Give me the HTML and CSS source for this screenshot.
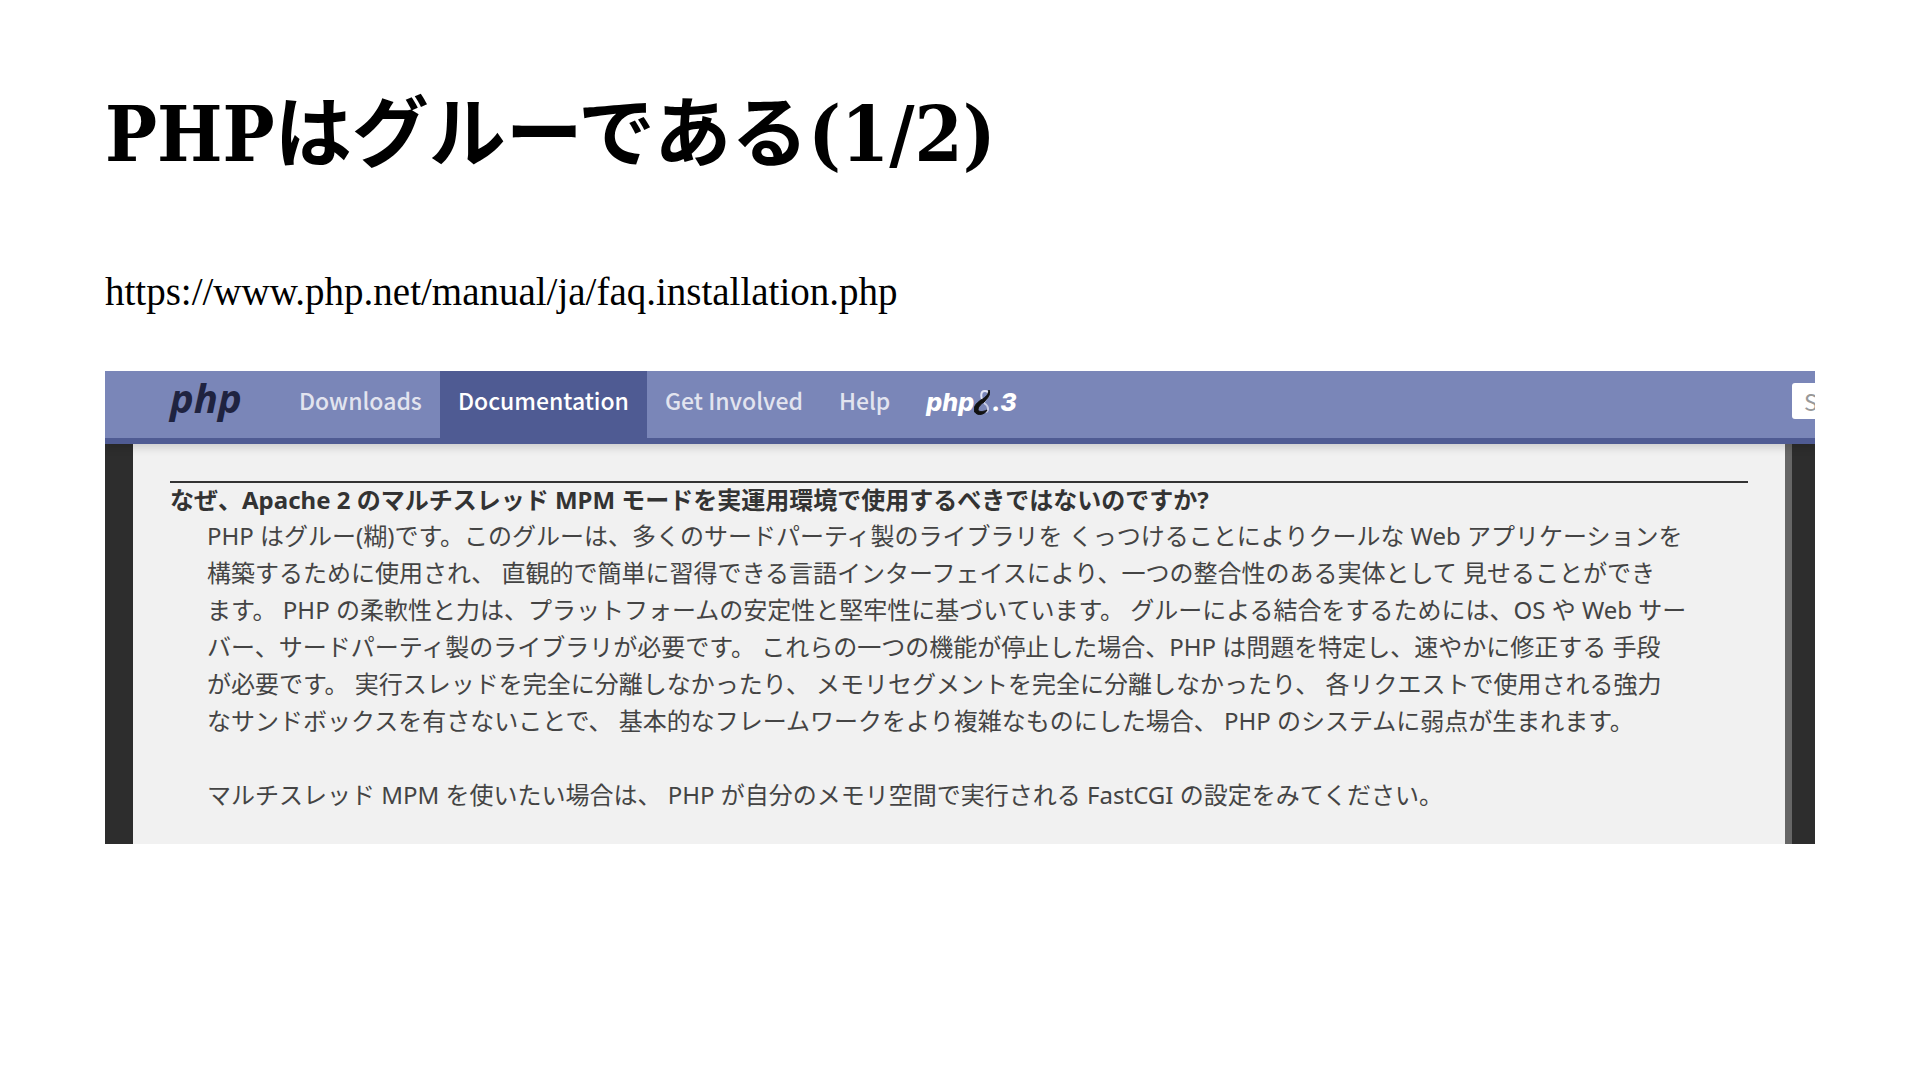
FILE: index.html
```html
<!DOCTYPE html>
<html lang="ja">
	<head>
		<meta charset="utf-8">
		<meta name="viewport" content="width=device-width,initial-scale=1.0">
		<title>PHPはグルーである(1/2)</title>
		<link rel="stylesheet" href="styles.css">
	</head>
	<body>
		<main class="slide">
			<h1>PHPは<wbr>グルーである(1/2)</h1>
			<p class="source">https://www.php.net/manual/ja/faq.installation.php</p>

			<section class="capture">
				<nav class="navbar">
					<a class="brand" href="#">php</a>
					<a class="item" href="#">Downloads</a>
					<a class="item active" href="#">Documentation</a>
					<a class="item" href="#">Get Involved</a>
					<a class="item" href="#">Help</a>
					<a class="release" href="#">
						<span>php</span>
						<svg width="18" height="28" viewBox="0 0 18 28" aria-label="8">
							<path d="M11 14C6 11 6 3 11 3c5 0 4 6-1 10" fill="none" stroke="#e4e6f4" stroke-width="2"/>
							<path d="M10 15c5 3 5 8 2 9" fill="none" stroke="#c9cde6" stroke-width="2"/>
							<path d="M15 2c2 5-2 9-5 12-4 3-6 5-6 8 1 2 5 2 9 0-3 6-12 6-13 0 0-5 4-8 7-10 5-3 7-5 8-10z" fill="#111" stroke="#111" stroke-width="1"/>
						</svg>
						<span>.3</span>
					</a>
					<input class="search" type="search" placeholder="Search" aria-label="Search">
				</nav>
				<div class="backdrop">
					<dl class="faq">
						<dt>なぜ、Apache 2 のマルチスレッド MPM モードを実運用環境で使用するべきではないのですか?</dt>
						<dd>
							<p>
								PHP はグルー(糊)です。このグルーは、多くのサードパーティ製のライブラリを くっつけることによりクールな Web アプリケーションを<br>
								構築するために使用され、 直観的で簡単に習得できる言語インターフェイスにより、一つの整合性のある実体として 見せることができ<br>
								ます。 PHP の柔軟性と力は、プラットフォームの安定性と堅牢性に基づいています。 グルーによる結合をするためには、OS や Web サー<br>
								バー、サードパーティ製のライブラリが必要です。 これらの一つの機能が停止した場合、PHP は問題を特定し、速やかに修正する 手段<br>
								が必要です。 実行スレッドを完全に分離しなかったり、 メモリセグメントを完全に分離しなかったり、 各リクエストで使用される強力<br>
								なサンドボックスを有さないことで、 基本的なフレームワークをより複雑なものにした場合、 PHP のシステムに弱点が生まれます。
							</p>
							<p>マルチスレッド MPM を使いたい場合は、 PHP が自分のメモリ空間で実行される FastCGI の設定をみてください。</p>
						</dd>
					</dl>
				</div>
			</section>
		</main>
	</body>
</html>
```
FILE: styles.css
```css
* {
	box-sizing: border-box;
}

body {
	margin: 0;
	background: #fff;
	color: #000;
}

.slide {
	padding: 82px 105px;
}

h1 {
	margin: 0;
	font-family: "DejaVu Serif Condensed", "DejaVu Serif", "Noto Sans CJK JP", serif;
	font-size: 77px;
	font-weight: bold;
	line-height: 104px;
}

.source {
	margin: 79px 0 52px;
	font-family: "Liberation Serif", "Noto Sans CJK JP", serif;
	font-size: 39px;
	line-height: 54px;
}

/* Screenshot of the manual page */
.capture {
	overflow: hidden;
	font-family: "Noto Sans CJK JP", sans-serif;
	font-size: 23px;
}

.navbar {
	display: flex;
	position: relative;
	height: 73px;
	padding-left: 65px;
	border-bottom: 6px solid #4f5b93;
	background: #7a86b8;
	box-shadow: 0 4px 8px rgba(0, 0, 0, 0.15);
	white-space: nowrap;
}

.navbar a {
	text-decoration: none;
	line-height: 58px;
}

.navbar .brand {
	width: 111px;
	color: #1f2340;
	font-family: "Open Sans", sans-serif;
	font-size: 40px;
	font-style: italic;
	font-weight: bold;
	line-height: 54px;
}

.item {
	padding: 0 18px;
	color: #e2e4ef;
	font-weight: 500;
}

.navbar .active {
	background: #4f5b93;
	color: #fff;
}

.release {
	display: flex;
	align-items: center;
	height: 62px;
	padding-left: 18px;
	color: #fff;
	font-family: Inter, sans-serif;
	font-size: 25px;
	font-style: italic;
	font-weight: 800;
}

.search {
	flex: none;
	width: 240px;
	height: 36px;
	margin: 12px -217px 0 auto;
	padding: 0 12px;
	border: none;
	border-radius: 3px;
	background: #fff;
	font: inherit;
}

.search::placeholder {
	color: #999;
}

.backdrop {
	padding: 0 23px 0 28px;
	background: #2d2d2d;
}

.faq {
	margin: 0;
	padding: 37px 37px 31px;
	border-right: 7px solid #666;
	background: #f1f1f1;
	color: #333;
	font-family: "Noto Sans", "Noto Sans CJK JP", sans-serif;
	font-size: 24px;
	line-height: 37px;
}

.faq dt {
	border-top: 2px solid #333;
	font-weight: bold;
	line-height: 34px;
}

.faq dd {
	margin: 0 0 0 37px;
	color: #444;
	white-space: nowrap;
}

.faq p {
	margin: 0 0 37px;
}

.faq p:last-child {
	margin-bottom: 0;
}
```
